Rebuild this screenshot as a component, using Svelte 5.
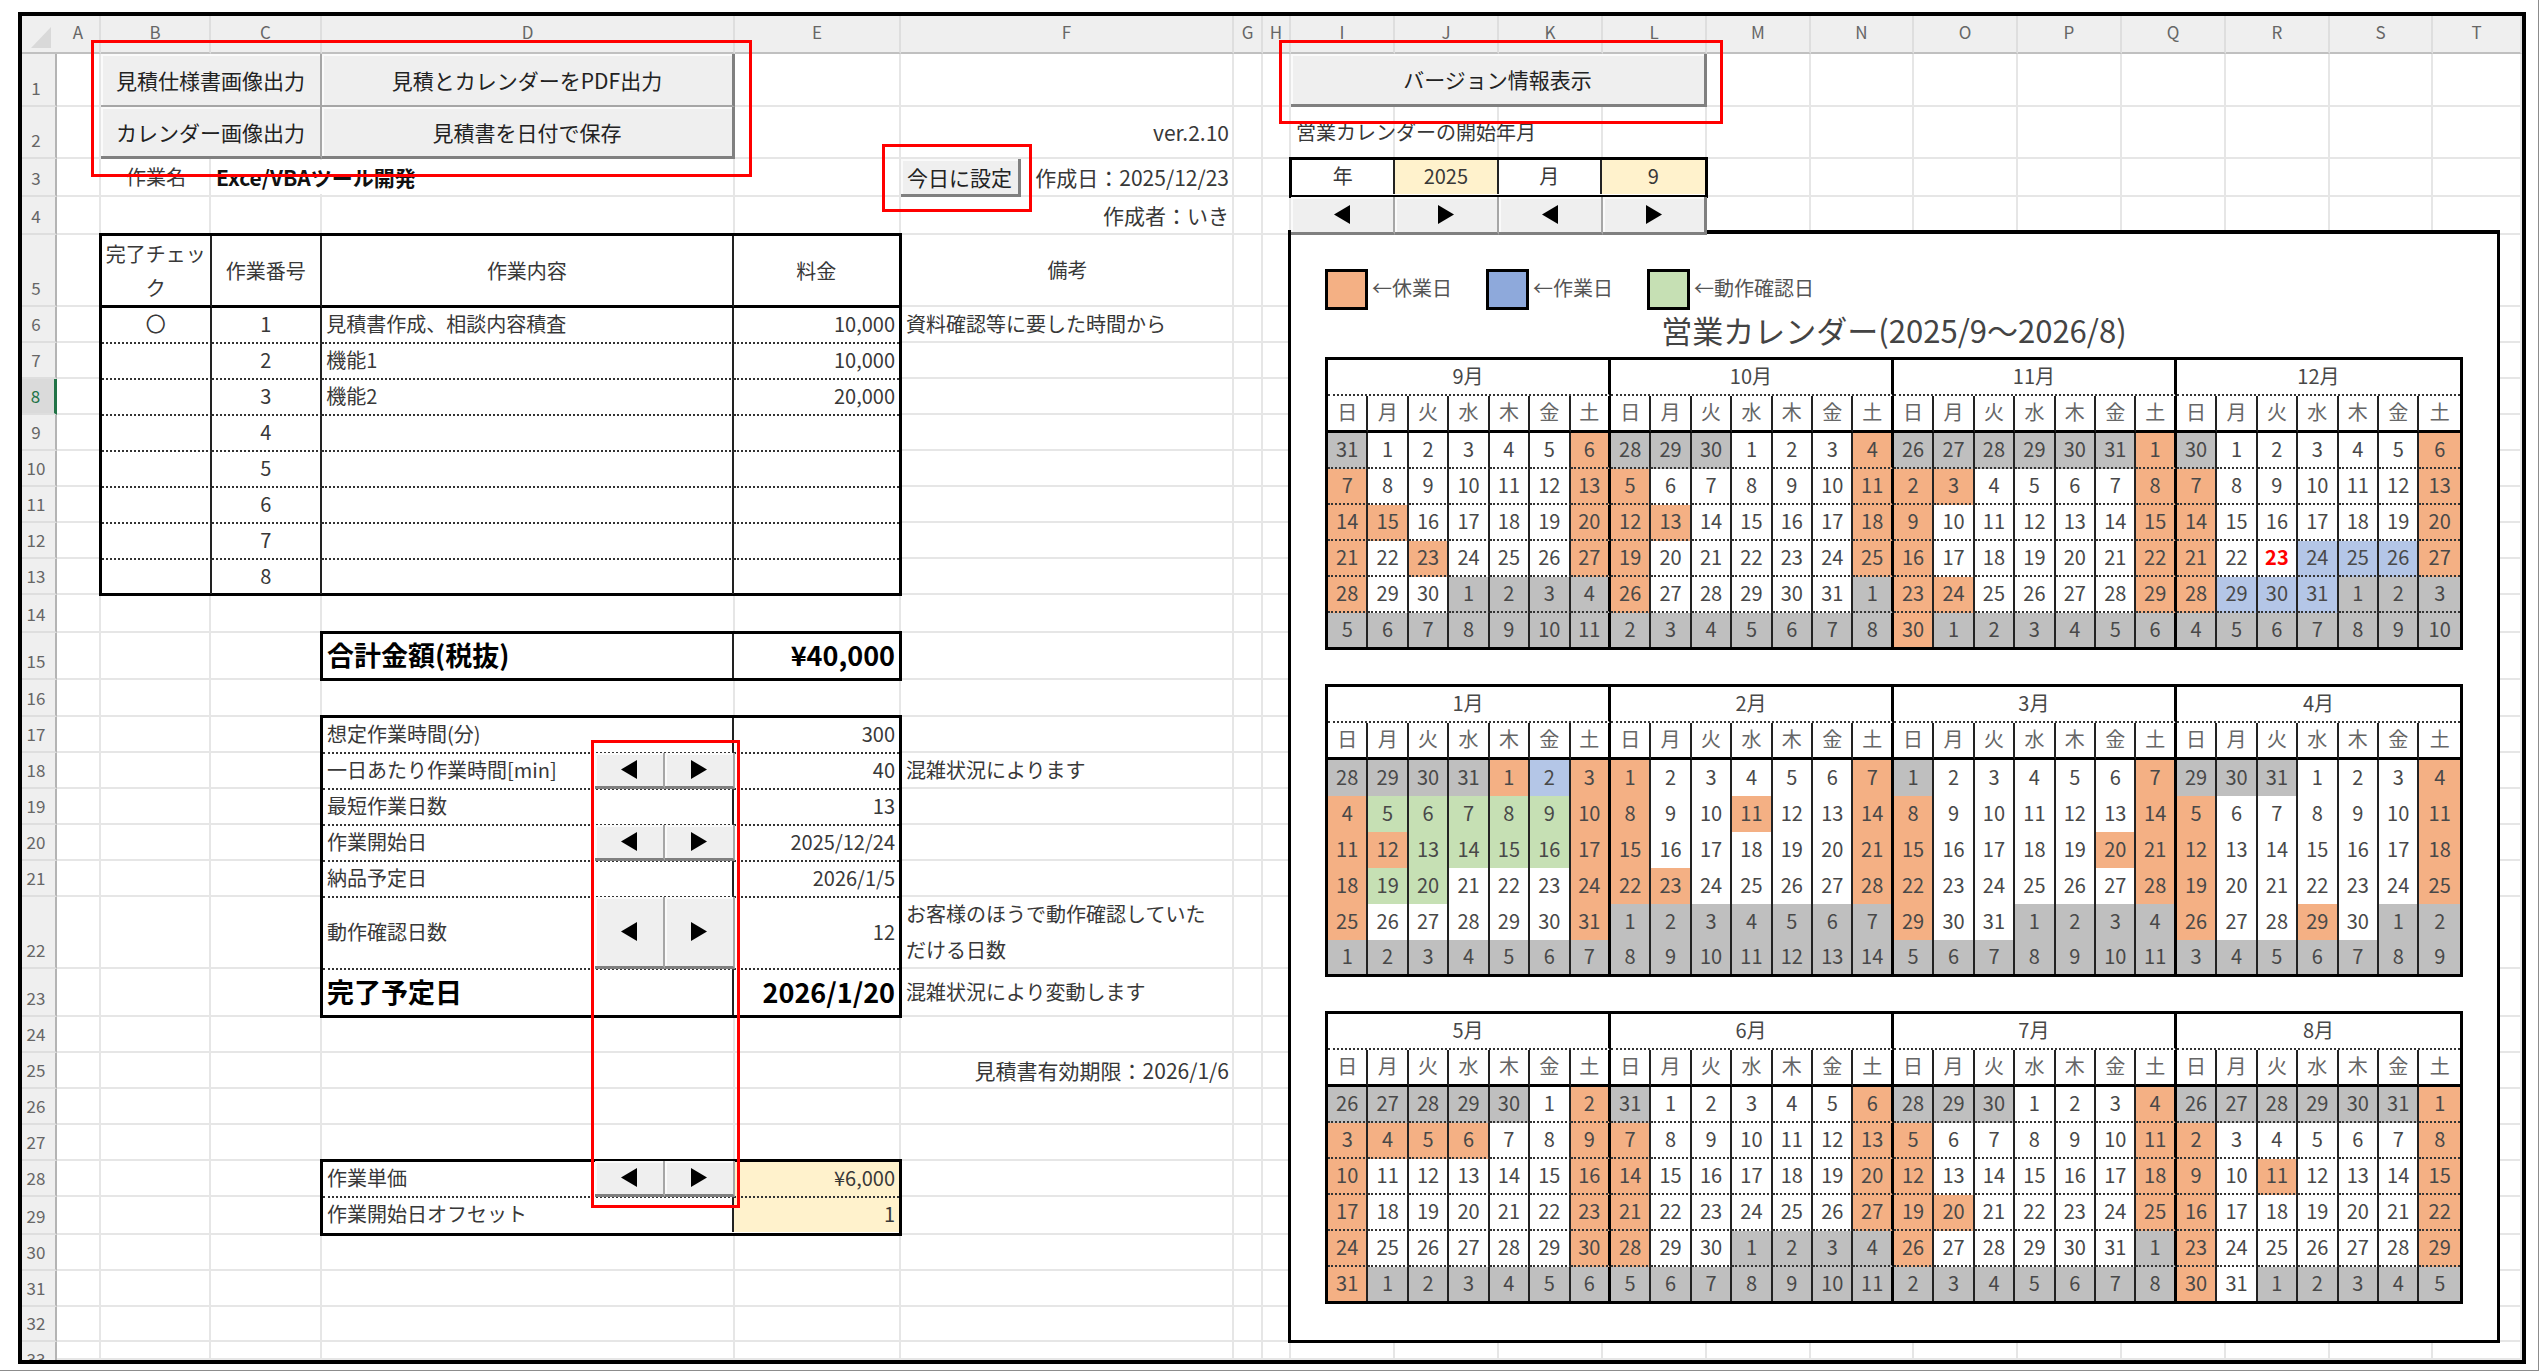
<script lang="ts">
  type Note = { col: string; row: number; text: string; cls?: string; to?: string };

  // column weights, A to T
  const cols: Record<string, number> = {
    A: 44, B: 110, C: 111, D: 413, E: 166, F: 333, G: 29, H: 28,
    I: 104, J: 104, K: 104, L: 104, M: 104, N: 103, O: 104, P: 104,
    Q: 104, R: 104, S: 103, T: 89,
  };
  const rows = [
    53, 52, 38, 38, 72, 36, 36, 36, 36, 36, 36, 36, 36, 38, 47, 37, 36,
    36, 36, 36, 36, 72, 48, 36, 36, 36, 36, 36, 38, 36, 36, 35, 18,
  ];
  const letters = Object.keys(cols);
  const gutter = 35;
  const selectedRow = 8;

  const template =
    `grid-template-columns: ${[gutter, ...Object.values(cols)].map((w) => `minmax(0, ${w}fr)`).join(" ")};` +
    `grid-template-rows: 38px ${rows.map((h) => `${h}px`).join(" ")};`;

  const line = (col: string) => letters.indexOf(col) + 2;

  function area(from: string, to: string, top: number, bottom: number = top) {
    return `grid-area: ${top + 1} / ${line(from)} / ${bottom + 2} / ${line(to) + 1};`;
  }

  function share(col: string, group: string[]) {
    const total = group.reduce((sum, c) => sum + cols[c], 0);
    return `width: ${(cols[col] / total) * 100}%;`;
  }

  const notes: Note[] = [
    { col: "B", row: 3, text: "作業名", cls: "center" },
    { col: "C", to: "D", row: 3, text: "Exce/VBAツール開発", cls: "strong" },
    { col: "F", row: 2, text: "ver.2.10", cls: "end" },
    { col: "F", row: 3, text: "作成日：2025/12/23", cls: "end" },
    { col: "F", row: 4, text: "作成者：いき", cls: "end" },
    { col: "F", row: 5, text: "備考", cls: "center" },
    { col: "F", row: 6, text: "資料確認等に要した時間から" },
    { col: "F", row: 18, text: "混雑状況によります" },
    { col: "F", row: 22, text: "お客様のほうで動作確認していた\nだける日数" },
    { col: "F", row: 23, text: "混雑状況により変動します" },
    { col: "F", row: 25, text: "見積書有効期限：2026/1/6", cls: "end" },
    { col: "I", to: "K", row: 2, text: "営業カレンダーの開始年月" },
  ];

  const jobs = [
    { done: "〇", name: "見積書作成、相談内容積査", price: "10,000" },
    { done: "", name: "機能1", price: "10,000" },
    { done: "", name: "機能2", price: "20,000" },
    ...Array.from({ length: 5 }, () => ({ done: "", name: "", price: "" })),
  ];

  const schedule = [
    { label: "想定作業時間(分)", value: "300" },
    { label: "一日あたり作業時間[min]", value: "40" },
    { label: "最短作業日数", value: "13" },
    { label: "作業開始日", value: "2025/12/24" },
    { label: "納品予定日", value: "2026/1/5" },
    { label: "動作確認日数", value: "12", cls: "tall" },
    { label: "完了予定日", value: "2026/1/20", cls: "big" },
  ];

  const spinners = [
    { row: 18, label: "一日あたり作業時間" },
    { row: 20, label: "作業開始日" },
    { row: 22, label: "動作確認日数" },
    { row: 28, label: "作業単価" },
  ];

  const weekdays = ["日", "月", "火", "水", "木", "金", "土"];
  const holidays = [
    "2025-9-15", "2025-9-23", "2025-10-13", "2025-11-3", "2025-11-24",
    "2026-1-1", "2026-1-12", "2026-2-11", "2026-2-23", "2026-3-20",
    "2026-4-29", "2026-5-4", "2026-5-5", "2026-5-6", "2026-7-20", "2026-8-11",
  ];
  const workDays = [
    "2025-12-24", "2025-12-25", "2025-12-26", "2025-12-29", "2025-12-30",
    "2025-12-31", "2026-1-2",
  ];
  const checkDays = [
    "2026-1-5", "2026-1-6", "2026-1-7", "2026-1-8", "2026-1-9",
    "2026-1-13", "2026-1-14", "2026-1-15", "2026-1-16", "2026-1-19", "2026-1-20",
  ];
  const greyed = ["2026-3-1"];
  const today = "2025-12-23";

  function dayClass(d: Date, month: number) {
    const key = `${d.getFullYear()}-${d.getMonth() + 1}-${d.getDate()}`;
    if (d.getMonth() !== month || greyed.includes(key)) return "out";
    if (d.getDay() === 0 || d.getDay() === 6 || holidays.includes(key)) return "off";
    if (workDays.includes(key)) return "work";
    if (checkDays.includes(key)) return "check";
    return key === today ? "today" : "";
  }

  function buildBlock(year: number, first: number) {
    const months = [0, 1, 2, 3].map((i) => new Date(year, first + i, 1));
    const weeks = Array.from({ length: 6 }, (_, w) =>
      months.flatMap((m) =>
        weekdays.map((_, i) => {
          const d = new Date(m.getFullYear(), m.getMonth(), 1 - m.getDay() + w * 7 + i);
          return { day: d.getDate(), cls: dayClass(d, m.getMonth()) };
        })
      )
    );
    return { names: months.map((m) => `${m.getMonth() + 1}月`), weeks };
  }

  const blocks = [buildBlock(2025, 8), buildBlock(2025, 12), buildBlock(2025, 16)];
</script>

{#snippet arrow(dir: string)}
  <svg width="16" height="19" viewBox="0 0 16 19" aria-hidden="true">
    <path d={dir === "prev" ? "M16 0V19L0 9.5Z" : "M0 0V19L16 9.5Z"} fill="#000" />
  </svg>
{/snippet}

<div class="page">
  <main class="sheet" style={template}>
    <div class="head-bg"></div>
    <div class="corner"><svg width="20" height="21" viewBox="0 0 20 21" aria-hidden="true"><path d="M20 0V21H0Z" fill="#d9d9d9" /></svg></div>
    {#each letters as letter, i}
      <div class="col-line" style="grid-column: {i + 2};"></div>
      <div class="col-head" style="grid-column: {i + 2};">{letter}</div>
    {/each}
    {#each rows as _, i}
      <div class="row-line" style="grid-row: {i + 2};"></div>
      <div class="row-head" class:selected={i + 1 === selectedRow} class:cut={i + 1 === rows.length} style="grid-row: {i + 2};">{i + 1}</div>
    {/each}

    {#each notes as note}
      <div class="note {note.cls ?? ''}" style={area(note.col, note.to ?? note.col, note.row)}><span>{note.text}</span></div>
    {/each}

    <button class="btn" style={area("B", "C", 1)}>見積仕様書画像出力</button>
    <button class="btn edge-right" style={area("D", "D", 1)}>見積とカレンダーをPDF出力</button>
    <button class="btn edge-bottom" style={area("B", "C", 2)}>カレンダー画像出力</button>
    <button class="btn edge-right edge-bottom" style={area("D", "D", 2)}>見積書を日付で保存</button>
    <button class="btn edge-right edge-bottom" style={area("I", "L", 1)}>バージョン情報表示</button>
    <button class="btn edge-right edge-bottom set-today" style={area("F", "F", 3)}>今日に設定</button>

    <div class="frame" style={area("B", "E", 5, 13)}>
      <table class="jobs">
        <colgroup>
          {#each ["B", "C", "D", "E"] as c}<col style={share(c, ["B", "C", "D", "E"])} />{/each}
        </colgroup>
        <thead>
          <tr><th>完了チェック</th><th>作業番号</th><th>作業内容</th><th>料金</th></tr>
        </thead>
        <tbody>
          {#each jobs as job, i}
            <tr>
              <td class="center">{job.done}</td>
              <td class="center">{i + 1}</td>
              <td>{job.name}</td>
              <td class="right">{job.price}</td>
            </tr>
          {/each}
        </tbody>
      </table>
    </div>

    <div class="frame" style={area("D", "E", 15)}>
      <table>
        <colgroup>
          {#each ["D", "E"] as c}<col style={share(c, ["D", "E"])} />{/each}
        </colgroup>
        <tbody>
          <tr class="total"><th scope="row">合計金額(税抜)</th><td class="right">¥40,000</td></tr>
        </tbody>
      </table>
    </div>

    <div class="frame" style={area("D", "E", 17, 23)}>
      <table>
        <colgroup>
          {#each ["D", "E"] as c}<col style={share(c, ["D", "E"])} />{/each}
        </colgroup>
        <tbody>
          {#each schedule as item}
            <tr class={item.cls}><th scope="row">{item.label}</th><td class="right">{item.value}</td></tr>
          {/each}
        </tbody>
      </table>
    </div>

    <div class="frame" style={area("D", "E", 28, 29)}>
      <table>
        <colgroup>
          {#each ["D", "E"] as c}<col style={share(c, ["D", "E"])} />{/each}
        </colgroup>
        <tbody>
          <tr><th scope="row">作業単価</th><td class="right input">¥6,000</td></tr>
          <tr><th scope="row">作業開始日オフセット</th><td class="right input">1</td></tr>
        </tbody>
      </table>
    </div>

    {#each spinners as s}
      <div class="spinner" style={area("D", "D", s.row)}>
        <button class="btn edge-bottom" aria-label="{s.label}を減らす">{@render arrow("prev")}</button>
        <button class="btn edge-bottom" aria-label="{s.label}を増やす">{@render arrow("next")}</button>
      </div>
    {/each}

    <section class="panel" style={area("I", "T", 5, 32)}>
      <div class="legend">
        <div class="key"><i class="off"></i>←休業日</div>
        <div class="key"><i class="work"></i>←作業日</div>
        <div class="key"><i class="check"></i>←動作確認日</div>
      </div>
      <h1>営業カレンダー(2025/9～2026/8)</h1>
      <div class="blocks">
        {#each blocks as block, b}
          <table class="calendar" class:plain={b === 1}>
            <thead>
              <tr class="months">
                {#each block.names as name}<th colspan="7">{name}</th>{/each}
              </tr>
              <tr class="weekdays">
                {#each block.names as _}
                  {#each weekdays as w}<th>{w}</th>{/each}
                {/each}
              </tr>
            </thead>
            <tbody>
              {#each block.weeks as week}
                <tr>
                  {#each week as d}<td class={d.cls}>{d.day}</td>{/each}
                </tr>
              {/each}
            </tbody>
          </table>
        {/each}
      </div>
    </section>

    <div class="frame start" style={area("I", "L", 3)}>
      <table>
        <tbody>
          <tr><th scope="row">年</th><td class="input">2025</td><th scope="row">月</th><td class="input">9</td></tr>
        </tbody>
      </table>
    </div>
    <div class="steps" style={area("I", "L", 4)}>
      <button class="btn edge-bottom" aria-label="前の年">{@render arrow("prev")}</button>
      <button class="btn edge-bottom" aria-label="次の年">{@render arrow("next")}</button>
      <button class="btn edge-bottom" aria-label="前の月">{@render arrow("prev")}</button>
      <button class="btn edge-right edge-bottom" aria-label="次の月">{@render arrow("next")}</button>
    </div>

    <div class="mark mark-output" style={area("B", "D", 1, 2)}></div>
    <div class="mark mark-today" style={area("F", "F", 3)}></div>
    <div class="mark mark-version" style={area("I", "L", 1)}></div>
    <div class="mark mark-spin" style={area("D", "D", 17, 29)}></div>
  </main>
</div>

<style>
  :global(body) {
    background: #fff;
  }

  .page {
    padding: 12px 12px 6px 18px;
    border-right: 1px solid #8c8c8c;
    border-bottom: 1px solid #8c8c8c;
    font-family: "Noto Sans CJK JP", "Noto Sans", sans-serif;
    font-size: 20px;
    line-height: 36px;
    color: #383838;
  }

  .page :is(div, main, section, button, i) {
    box-sizing: border-box;
  }

  .sheet {
    display: grid;
    border: 4px solid #000;
    overflow: hidden;
  }

  /* headers and grid lines */
  .head-bg {
    grid-area: 1 / 1 / 2 / -1;
    background: #efefef;
    border-bottom: 2px solid #c0c0c0;
  }

  .corner {
    grid-area: 1 / 1;
    display: flex;
    justify-content: flex-end;
    align-items: flex-end;
    padding: 0 6px 6px 0;
  }

  .col-head {
    grid-row: 1;
    border-right: 2px solid #dedede;
    border-bottom: 2px solid #c0c0c0;
    font-size: 17px;
    line-height: 32px;
    text-align: center;
    color: #666;
  }

  .col-line {
    grid-row: 2 / -1;
    border-right: 2px solid #e6e6e6;
  }

  .row-line {
    grid-column: 2 / -1;
    border-bottom: 2px solid #e6e6e6;
  }

  .row-head {
    grid-column: 1;
    display: flex;
    justify-content: center;
    align-items: flex-end;
    padding-right: 5px;
    background: #efefef;
    border-right: 2px solid #b4b4b4;
    border-bottom: 2px solid #dedede;
    font-size: 17px;
    line-height: 34px;
    color: #666;
  }

  .row-head.selected {
    background: #dadada;
    border-right: 3px solid #217346;
    color: #217346;
  }

  .row-head.cut {
    align-items: flex-start;
    border-bottom: 0;
    overflow: hidden;
  }

  /* free text in cells */
  .note {
    display: flex;
    align-items: center;
    padding: 0 5px 2px;
    white-space: pre;
  }

  .note.center { justify-content: center; }

  .note.end {
    justify-content: flex-end;
    font-size: 21px;
  }

  .note.strong {
    font-size: 21px;
    font-weight: 700;
    color: #111;
  }

  .note.strong span {
    background: #fff;
    line-height: 34px;
  }

  /* form buttons */
  .btn {
    display: flex;
    align-items: center;
    justify-content: center;
    min-width: 0;
    padding: 0;
    border: 0 solid #808080;
    border-right: 2px solid #a6a6a6;
    border-bottom: 2px solid #a6a6a6;
    background: #efefef;
    font: inherit;
    font-size: 21px;
    line-height: 32px;
    color: #222;
    box-shadow: inset 2px 2px 0 #fafafa;
  }

  .btn.edge-right { border-right: 3px solid #808080; }
  .btn.edge-bottom { border-bottom: 3px solid #808080; }

  .set-today {
    width: 36%;
  }

  .spinner {
    display: grid;
    grid-template-columns: 1fr 1fr;
    justify-self: end;
    width: 34%;
  }

  .steps {
    display: grid;
    grid-template-columns: repeat(4, 1fr);
  }

  /* bordered tables */
  .frame {
    margin: -2px -1px -1px -2px;
    border: 3px solid #000;
    background: #fff;
  }

  table {
    width: 100%;
    table-layout: fixed;
    border-collapse: separate;
    border-spacing: 0;
  }

  th,
  td {
    box-sizing: border-box;
    height: 36px;
    padding: 0 4px 2px;
    line-height: 32px;
    font-weight: 400;
    text-align: left;
    white-space: nowrap;
    border-right: 2px solid #222;
    border-bottom: 2px dotted #333;
  }

  th:last-child,
  td:last-child { border-right: 0; }
  tbody tr:last-child > * { height: 34px; border-bottom: 0; }

  .center { text-align: center; }
  .right { text-align: right; }
  .input { background: #fff2cc; }

  .jobs th {
    height: 72px;
    padding: 0 2px;
    line-height: 34px;
    text-align: center;
    white-space: normal;
    line-break: anywhere;
    border-bottom: 3px solid #000;
  }

  .tall > * { height: 72px; }

  tbody tr.total > *,
  tbody tr.big > * {
    height: 45px;
    font-size: 27px;
    font-weight: 700;
    color: #000;
  }

  tbody tr.total > * { height: 44px; }

  .start th,
  .start td {
    text-align: center;
  }

  /* calendar */
  .panel {
    margin: -5px 22px -1px -3px;
    padding: 35px 34px 0;
    border: 3px solid #000;
    border-top-width: 4px;
    background: #fff;
  }

  .legend {
    display: flex;
    gap: 34px;
    line-height: 38px;
    color: #555;
  }

  .key {
    display: flex;
    gap: 4px;
  }

  .key i {
    width: 43px;
    height: 41px;
    border: 3px solid #000;
  }

  h1 {
    margin: 0 0 7px;
    font-size: 31px;
    line-height: 40px;
    font-weight: 400;
    text-align: center;
    color: #444;
  }

  .blocks {
    display: grid;
    gap: 34px;
  }

  .calendar {
    border: 3px solid #000;
    color: #484848;
  }

  .calendar th,
  .calendar td {
    padding: 0 0 2px;
    text-align: center;
  }

  .calendar .months th,
  .calendar tr > :nth-child(7n) {
    border-right: 3px solid #000;
  }

  .calendar tr > :last-child,
  .calendar .months th:last-child { border-right: 0; }
  .calendar .weekdays th { border-bottom: 3px solid #000; color: #666; }
  .calendar.plain tbody td { border-bottom: 0; }

  .off { background: #f4b084; }
  .work { background: #b4c6e7; }
  .check { background: #c6e0b4; }
  .out { background: #bfbfbf; }
  .key .work { background: #8ea9db; }
  .today { font-weight: 700; color: #f00; }

  /* red call-outs drawn over the sheet */
  .mark {
    border: 3px solid #f00;
    pointer-events: none;
  }

  .mark-output { margin: -14px -17px -18px -10px; }
  .mark-version { margin: -14px -16px -17px -12px; }

  .mark-today {
    width: 45%;
    margin: -15px 0 -15px -19px;
  }

  .mark-spin {
    justify-self: end;
    width: 36%;
    margin: 23px -5px 27px 0;
  }
</style>
